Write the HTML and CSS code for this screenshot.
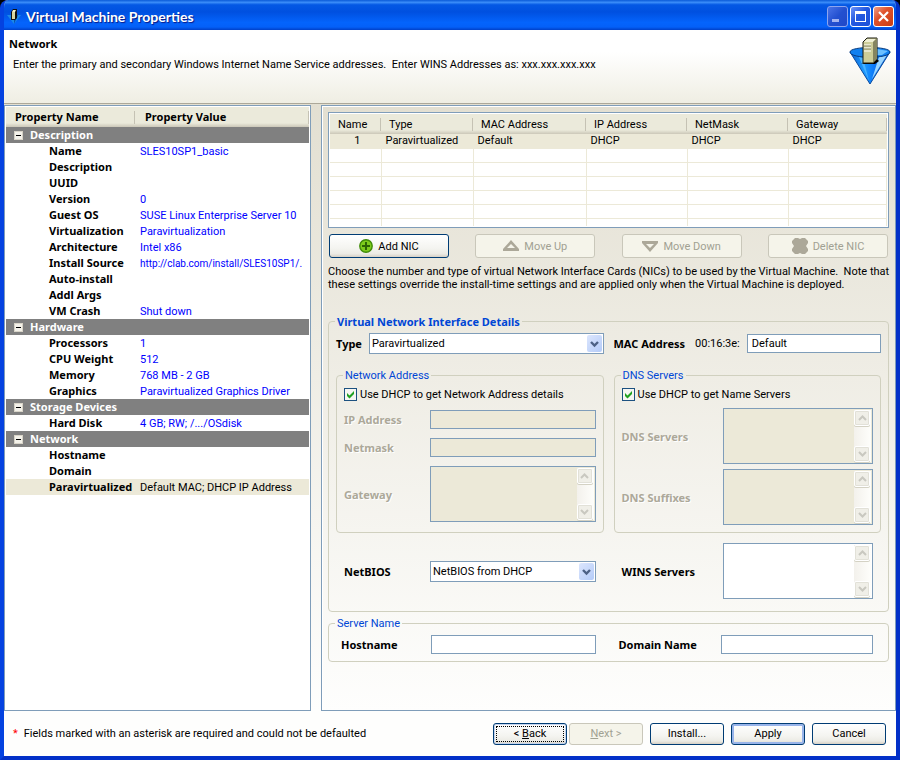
FILE: index.html
```html
<!DOCTYPE html>
<html lang="en">
<head>
    <meta charset="UTF-8">
    <meta name="viewport" content="width=device-width, initial-scale=1.0">
    <title>Virtual Machine Properties</title>
    <link rel="stylesheet" href="styles.css">
</head>
<body>
    <div class="window">
        <div class="titlebar">
            <svg class="app-icon" width="16" height="16" viewBox="0 0 16 16">
                <path d="M1 6 L15 6 L8 15 Z" fill="#1b8ae8"/>
                <path d="M8 6 L12 6 L8 15 Z" fill="#0a4fb0"/>
                <path d="M5 3 L7 0 L11 0 L11 9 L9 11 L5 11 Z" fill="#111"/>
                <path d="M6 3 H9 V10 H6 Z" fill="#d8d6a4"/>
                <path d="M7 1 H10 L9 3 H6 Z" fill="#f4f2d0"/>
            </svg>
            <h1>Virtual Machine Properties</h1>
            <div class="window-buttons">
                <button class="win-btn inactive" aria-label="Minimize">
                    <svg width="19" height="19" viewBox="0 0 19 19"><path d="M4 12 H11 V15 H4 Z" fill="#a3b4f0"/></svg>
                </button>
                <button class="win-btn" aria-label="Maximize">
                    <svg width="19" height="19" viewBox="0 0 19 19"><path d="M4 4 H15 V15 H4 Z M5 7 V14 H14 V7 Z" fill="#fff" fill-rule="evenodd"/></svg>
                </button>
                <button class="win-btn close" aria-label="Close">
                    <svg width="19" height="19" viewBox="0 0 19 19"><path d="M5 5 L14 14 M14 5 L5 14" stroke="#fff" stroke-width="2.2"/></svg>
                </button>
            </div>
        </div>

        <div class="banner">
            <div>
                <h2>Network</h2>
                <p>Enter the primary and secondary Windows Internet Name Service addresses.&nbsp; Enter WINS Addresses as: xxx.xxx.xxx.xxx</p>
            </div>
            <svg class="logo" width="42" height="48" viewBox="0 0 42 48">
                <defs>
                    <linearGradient id="cone" x1="0" x2="1" y1="0" y2="0">
                        <stop offset="0" stop-color="#0a5fd0"/>
                        <stop offset=".35" stop-color="#1e9bff"/>
                        <stop offset=".6" stop-color="#0a78f8"/>
                        <stop offset="1" stop-color="#0a58c8"/>
                    </linearGradient>
                </defs>
                <path d="M1 15 L21 47 L41 15 Z" fill="url(#cone)" stroke="#0b4a9c"/>
                <path d="M38 18 L30 20 L23 42 Z" fill="#9ad6ff"/>
                <path d="M10 20 L20 44 L14 21 Z" fill="#4ab4ff"/>
                <path d="M1 15 C1 9 41 9 41 15 C41 22 1 22 1 15 Z" fill="#1080f0" stroke="#083c80"/>
                <path d="M28 12 L39 14 L33 18 L28 18 Z" fill="#6cc0ff"/>
                <path d="M12 27 H26 L30 24 L28 22 Z" fill="#000"/>
                <path d="M14 5 L18 1 H28 V22 L24 26 H14 Z" fill="#cdcd98" stroke="#1a1a10"/>
                <path d="M15 5 L18 2 H27 L24 5 Z" fill="#f0f0d4"/>
                <path d="M24 5 L28 1 V22 L24 26 Z" fill="#858560"/>
                <path d="M15 8 H22 M15 11 H22 M15 14 H22" stroke="#fff"/>
                <path d="M15 9 H22 M15 12 H22" stroke="#8c8c6a"/>
            </svg>
        </div>

        <div class="content">
            <div class="property-pane">
                <table class="properties">
                    <thead>
                        <tr><th>Property Name</th><th>Property Value</th></tr>
                    </thead>
                    <tbody>
                        <tr class="group"><td colspan="2"><button class="toggle" aria-label="Collapse"></button>Description</td></tr>
                        <tr><th>Name</th><td>SLES10SP1_basic</td></tr>
                        <tr><th>Description</th><td></td></tr>
                        <tr><th>UUID</th><td></td></tr>
                        <tr><th>Version</th><td>0</td></tr>
                        <tr><th>Guest OS</th><td>SUSE Linux Enterprise Server 10</td></tr>
                        <tr><th>Virtualization</th><td>Paravirtualization</td></tr>
                        <tr><th>Architecture</th><td>Intel x86</td></tr>
                        <tr><th>Install Source</th><td class="url">http://clab.com/install/SLES10SP1/.</td></tr>
                        <tr><th>Auto-install</th><td></td></tr>
                        <tr><th>Addl Args</th><td></td></tr>
                        <tr><th>VM Crash</th><td>Shut down</td></tr>
                        <tr class="group"><td colspan="2"><button class="toggle" aria-label="Collapse"></button>Hardware</td></tr>
                        <tr><th>Processors</th><td>1</td></tr>
                        <tr><th>CPU Weight</th><td>512</td></tr>
                        <tr><th>Memory</th><td>768 MB - 2 GB</td></tr>
                        <tr><th>Graphics</th><td>Paravirtualized Graphics Driver</td></tr>
                        <tr class="group"><td colspan="2"><button class="toggle" aria-label="Collapse"></button>Storage Devices</td></tr>
                        <tr><th>Hard Disk</th><td>4 GB; RW; /.../OSdisk</td></tr>
                        <tr class="group"><td colspan="2"><button class="toggle" aria-label="Collapse"></button>Network</td></tr>
                        <tr><th>Hostname</th><td></td></tr>
                        <tr><th>Domain</th><td></td></tr>
                        <tr class="selected"><th>Paravirtualized</th><td>Default MAC; DHCP IP Address</td></tr>
                    </tbody>
                </table>
            </div>

            <div class="detail-pane">
                <div class="nic-box">
                    <table class="nics">
                        <thead>
                            <tr><th class="col-name">Name</th><th class="col-type">Type</th><th class="col-mac">MAC Address</th><th class="col-ip">IP Address</th><th class="col-mask">NetMask</th><th class="col-gw">Gateway</th></tr>
                        </thead>
                        <tbody>
                            <tr class="selected"><td>1</td><td>Paravirtualized</td><td>Default</td><td>DHCP</td><td>DHCP</td><td>DHCP</td></tr>
                            <tr><td></td><td></td><td></td><td></td><td></td><td></td></tr>
                            <tr><td></td><td></td><td></td><td></td><td></td><td></td></tr>
                            <tr><td></td><td></td><td></td><td></td><td></td><td></td></tr>
                            <tr><td></td><td></td><td></td><td></td><td></td><td></td></tr>
                            <tr><td></td><td></td><td></td><td></td><td></td><td></td></tr>
                            <tr><td></td><td></td><td></td><td></td><td></td><td></td></tr>
                        </tbody>
                    </table>
                </div>

                <div class="nic-actions">
                    <button class="btn">
                        <svg width="14" height="14" viewBox="0 0 14 14"><circle cx="7" cy="7" r="6.2" fill="#7ccb1c" stroke="#3f8a08" stroke-width="1.4"/><path d="M7 3 V11 M3 7 H11" stroke="#2c6404" stroke-width="2"/></svg>
                        Add NIC
                    </button>
                    <button class="btn" disabled>
                        <svg width="16" height="12" viewBox="0 0 16 12"><path d="M8 0 L16 9 V11 H0 V9 Z M8 4 L4 8 H12 Z" fill="#aca899" fill-rule="evenodd"/></svg>
                        Move Up
                    </button>
                    <button class="btn" disabled>
                        <svg width="16" height="12" viewBox="0 0 16 12"><path d="M8 12 L16 3 V1 H0 V3 Z M8 8 L4 4 H12 Z" fill="#aca899" fill-rule="evenodd"/></svg>
                        Move Down
                    </button>
                    <button class="btn" disabled>
                        <svg width="16" height="16" viewBox="0 0 16 16"><path d="M3 0 H6 L8 1 L10 0 H13 L16 3 V5 L14 8 L16 11 V13 L13 16 H10 L8 15 L6 16 H3 L0 13 V11 L2 8 L0 5 V3 Z" fill="#aca899"/></svg>
                        Delete NIC
                    </button>
                </div>

                <p class="hint">Choose the number and type of virtual Network Interface Cards (NICs) to be used by the Virtual Machine.&nbsp; Note that these settings override the install-time settings and are applied only when the Virtual Machine is deployed.</p>

                <fieldset class="nic-details">
                    <legend>Virtual Network Interface Details</legend>
                    <div class="columns">
                        <div class="type-row">
                            <label for="nicType">Type</label>
                            <div class="select">
                                <select id="nicType"><option>Paravirtualized</option></select>
                                <svg width="15" height="17" viewBox="0 0 15 17"><path d="M4 7 L7.5 10.5 L11 7" fill="none" stroke="#4d6185" stroke-width="2.4"/></svg>
                            </div>
                        </div>
                        <div class="mac-row">
                            <label for="mac">MAC Address</label>
                            <span>00:16:3e:</span>
                            <input type="text" id="mac" value="Default">
                        </div>

                        <fieldset class="address">
                            <legend>Network Address</legend>
                            <label class="check"><input type="checkbox" checked> Use DHCP to get Network Address details</label>
                            <div class="field">
                                <label for="ip">IP Address</label>
                                <input type="text" id="ip" disabled>
                            </div>
                            <div class="field">
                                <label for="netmask">Netmask</label>
                                <input type="text" id="netmask" disabled>
                            </div>
                            <div class="field">
                                <label for="gateway">Gateway</label>
                                <div class="list disabled">
                                    <textarea id="gateway" disabled></textarea>
                                    <div class="scrollbar">
                                        <button aria-label="Up"><svg width="9" height="6" viewBox="0 0 9 6"><path d="M1 5 L4.5 1.5 L8 5"/></svg></button>
                                        <button aria-label="Down"><svg width="9" height="6" viewBox="0 0 9 6"><path d="M1 1 L4.5 4.5 L8 1"/></svg></button>
                                    </div>
                                </div>
                            </div>
                        </fieldset>

                        <fieldset class="dns">
                            <legend>DNS Servers</legend>
                            <label class="check"><input type="checkbox" checked> Use DHCP to get Name Servers</label>
                            <div class="field">
                                <label for="dnsServers">DNS Servers</label>
                                <div class="list disabled">
                                    <textarea id="dnsServers" disabled></textarea>
                                    <div class="scrollbar">
                                        <button aria-label="Up"><svg width="9" height="6" viewBox="0 0 9 6"><path d="M1 5 L4.5 1.5 L8 5"/></svg></button>
                                        <button aria-label="Down"><svg width="9" height="6" viewBox="0 0 9 6"><path d="M1 1 L4.5 4.5 L8 1"/></svg></button>
                                    </div>
                                </div>
                            </div>
                            <div class="field">
                                <label for="dnsSuffixes">DNS Suffixes</label>
                                <div class="list disabled">
                                    <textarea id="dnsSuffixes" disabled></textarea>
                                    <div class="scrollbar">
                                        <button aria-label="Up"><svg width="9" height="6" viewBox="0 0 9 6"><path d="M1 5 L4.5 1.5 L8 5"/></svg></button>
                                        <button aria-label="Down"><svg width="9" height="6" viewBox="0 0 9 6"><path d="M1 1 L4.5 4.5 L8 1"/></svg></button>
                                    </div>
                                </div>
                            </div>
                        </fieldset>

                        <div class="field netbios">
                            <label for="netbios">NetBIOS</label>
                            <div class="select">
                                <select id="netbios"><option>NetBIOS from DHCP</option></select>
                                <svg width="15" height="17" viewBox="0 0 15 17"><path d="M4 7 L7.5 10.5 L11 7" fill="none" stroke="#4d6185" stroke-width="2.4"/></svg>
                            </div>
                        </div>
                        <div class="field wins">
                            <label for="wins">WINS Servers</label>
                            <div class="list">
                                <textarea id="wins"></textarea>
                                <div class="scrollbar">
                                    <button aria-label="Up"><svg width="9" height="6" viewBox="0 0 9 6"><path d="M1 5 L4.5 1.5 L8 5"/></svg></button>
                                    <button aria-label="Down"><svg width="9" height="6" viewBox="0 0 9 6"><path d="M1 1 L4.5 4.5 L8 1"/></svg></button>
                                </div>
                            </div>
                        </div>
                    </div>
                </fieldset>

                <fieldset class="server-name">
                    <legend>Server Name</legend>
                    <div class="columns">
                        <div class="field">
                            <label for="hostname">Hostname</label>
                            <input type="text" id="hostname">
                        </div>
                        <div class="field wins">
                            <label for="domain">Domain Name</label>
                            <input type="text" id="domain">
                        </div>
                    </div>
                </fieldset>
            </div>
        </div>

        <div class="footer">
            <p><span class="required">*</span>Fields marked with an asterisk are required and could not be defaulted</p>
            <div class="nav-buttons">
                <button class="btn focused">&lt; <u>B</u>ack</button>
                <button class="btn" disabled><u>N</u>ext &gt;</button>
            </div>
            <button class="btn">Install...</button>
            <button class="btn default">Apply</button>
            <button class="btn">Cancel</button>
        </div>
    </div>
</body>
</html>
```

FILE: styles.css
```css
* { box-sizing: border-box; }
body { margin: 0; background: #000; color: #000; font: 11px/13px Roboto, Tahoma, sans-serif; }
h1, h2, p { margin: 0; }
button, input, select, textarea { font: inherit; color: inherit; margin: 0; padding: 0; }

.window { display: flex; flex-direction: column; min-height: 100vh; background: linear-gradient(#dedaca, #fefefd 94%); border: 4px solid #0442e0; border-top: 0; border-right-color: #0230c8; border-bottom-color: #0230c8; border-radius: 8px 8px 0 0; overflow: hidden; }

/* title bar */
.titlebar { display: flex; align-items: center; gap: 4px; height: 30px; margin: 0 -4px; padding: 3px 6px 0 6px; background: linear-gradient(#0a5ad8, #3a8cf8 8%, #0458e4 16%, #0050e0 40%, #0464fc 75%, #0460f8 90%, #0040c8); }
.titlebar h1 { flex: 1; color: #fff; font: bold 14px/16px Lato, "Trebuchet MS", sans-serif; text-shadow: 1px 1px 1px #0a1883; }
.window-buttons { display: flex; gap: 2px; }
.win-btn { width: 21px; height: 21px; border: 1px solid #fff; border-radius: 3px; background: linear-gradient(135deg, #6d93f8, #2358e0 45%, #1d50d8); }
.win-btn svg { display: block; }
.win-btn.inactive { border-color: #8ea5ee; background: linear-gradient(135deg, #4a74e8, #2350d0 50%, #2048c8); }
.win-btn.close { background: linear-gradient(135deg, #f0a088, #e0522c 40%, #c83c14); }

/* banner */
.banner { display: flex; justify-content: space-between; height: 74px; padding: 7px 5px 0; background: linear-gradient(#fff 30%, #efeee3); border-bottom: 1px solid #aca899; }
.banner h2 { font: bold 11px/14px "Noto Sans", sans-serif; }
.banner p { padding: 7px 4px; }

/* main area */
.content { display: flex; flex: 1; gap: 10px; padding-top: 1px; }
.property-pane { width: 307px; padding: 1px; background: #fff; border: 1px solid #7f9db9; }
.detail-pane { flex: 1; min-width: 0; padding: 6px; border: 1px solid #7f9db9; box-shadow: inset 1px 1px #fff; }

.properties { width: 100%; table-layout: fixed; border-collapse: collapse; }
.properties th, .properties td { height: 16px; padding: 0; text-align: left; white-space: nowrap; line-height: 14px; }
.properties th, .properties .group td { font-family: "Noto Sans", sans-serif; font-weight: bold; }
.properties thead th { height: 20px; padding-left: 10px; background: linear-gradient(#c5c2b4, #c5c2b4) no-repeat right center / 1px 13px, linear-gradient(#ebeadb 16px, #cbc7b8); }
.properties thead th:first-child { width: 129px; padding-left: 9px; }
.properties tbody th { padding-left: 43px; }
.properties tbody td { padding: 2px 0 0 5px; color: #00f; }
.properties .group td { padding: 0 0 0 8px; background: #808080; color: #fff; }
.properties .url { font-size: 10px; }
.properties .selected { background: #ece9d8; }
.properties .selected td { color: #000; }
.toggle { width: 9px; height: 9px; margin-right: 7px; border: 1px solid #d8d4c8; background: linear-gradient(#000, #000) no-repeat center / 5px 1px #f4f2ea; vertical-align: 0; }

.nic-box { padding: 1px; background: #fff; border: 1px solid #7f9db9; }
.nics { width: 100%; table-layout: fixed; border-collapse: collapse; }
.nics th { height: 20px; padding: 0 0 0 8px; text-align: left; font-weight: normal; background: linear-gradient(#c5c2b4, #c5c2b4) no-repeat right center / 1px 13px, linear-gradient(#ebeadb 16px, #cbc7b8); }
.nics td { height: 14px; padding: 0 0 0 4px; line-height: 13px; border-right: 1px solid #ece9d8; border-bottom: 1px solid #ece9d8; }
.nics td:first-child { text-align: center; }
.nics .selected { background: #ece9d8; }
.nics tr:last-child td { height: 8px; border-bottom: 0; }
.col-name { width: 51px; }
.col-type { width: 92px; }
.col-mac { width: 113px; }
.col-ip, .col-mask { width: 101px; }

/* buttons */
.btn { display: flex; align-items: center; justify-content: center; gap: 5px; height: 22px; border: 1px solid #003c74; border-radius: 3px; background: linear-gradient(#fff, #f4f4f0 60%, #ecebe5 85%, #d6d0c5); }
.btn:disabled { border-color: #c9c7ba; background: #f5f4ea; color: #a1a192; }
.btn.default { box-shadow: inset 0 0 0 2px #98b4ea; }
.btn.focused { outline: 1px dotted #000; outline-offset: -4px; box-shadow: inset 0 0 0 1px #c5d4ee; }
.nic-actions { display: flex; justify-content: space-between; margin-top: 6px; padding: 0 1px; }
.nic-actions .btn { width: 120px; height: 24px; }
.hint { margin: 7px -5px 0 0; }

/* form */
fieldset { min-width: 0; margin: 0; padding: 0; border: 1px solid #d0d0bf; border-radius: 4px; }
legend { padding: 0 2px; color: #0046d5; }
label { font-family: "Noto Sans", sans-serif; font-weight: bold; }
input[type=text], select { height: 19px; border: 1px solid #7f9db9; background: #fff; }
input[type=text] { width: 100%; min-width: 0; padding-left: 4px; border-radius: 0; }
input[type=text]:disabled { background: #ece9d8; }
.nic-details { margin-top: 24px; padding: 5px 7px 12px; }
.nic-details legend, .server-name legend { margin-left: -1px; }
.nic-details > legend { font-family: "Noto Sans", sans-serif; font-weight: bold; }
.columns { display: grid; grid-template-columns: minmax(0, 1fr) minmax(0, 1fr); column-gap: 10px; }
.type-row, .mac-row { display: flex; align-items: center; gap: 7px; }
.mac-row span { padding-left: 3px; }
.mac-row input { flex: 1; }
.select { position: relative; flex: 1; }
select { display: block; width: 100%; height: 21px; padding-left: 2px; appearance: none; border-radius: 0; }
.select svg { position: absolute; right: 2px; top: 2px; border-radius: 2px; background: linear-gradient(135deg, #dce6fd, #b4cbf8); pointer-events: none; }
.address, .dns { margin-top: 15px; padding: 6px 7px 10px; }
.check { display: flex; align-items: center; gap: 3px; height: 13px; font-family: inherit; font-weight: normal; }
.check input { appearance: none; width: 13px; height: 13px; border: 1px solid #1c5180; background: url("data:image/svg+xml,%3Csvg xmlns='http://www.w3.org/2000/svg' viewBox='0 0 11 11'%3E%3Cpath d='M2 4 L4.500 6.500 L9 2 V5 L4.500 9.500 L2 7 Z' fill='%2321a121'/%3E%3C/svg%3E") #f6f6f2; }
.field { display: grid; grid-template-columns: 86px minmax(0, 1fr); align-items: center; margin-top: 9px; }
.address .field label, .dns .field label { color: #aca899; text-shadow: 1px 1px #fff; }
.dns { padding-bottom: 7px; }
.dns .field { grid-template-columns: 101px minmax(0, 1fr); margin-top: 5px; }
.dns .check + .field { margin-top: 7px; }
.list { display: flex; height: 56px; padding: 1px; border: 1px solid #7f9db9; background: #fff; }
.list.disabled { background: #ece9d8; }
.list textarea { flex: 1; min-width: 0; border: 0; background: none; resize: none; }
.scrollbar { display: flex; flex-direction: column; justify-content: space-between; width: 17px; padding-right: 1px; background: linear-gradient(90deg, #f3f1ec, #fefefb); }
.scrollbar button { display: flex; align-items: center; justify-content: center; width: 16px; height: 16px; border: 1px solid #fff; border-radius: 2px; background: #f0efe8; box-shadow: inset 0 0 0 1px #e2e1d8, 0 1px #d4d2c4; }
.scrollbar path { fill: none; stroke: #c9c8c0; stroke-width: 2; }
.netbios, .wins { margin-top: 10px; padding: 0 8px; }
.wins { grid-template-columns: 101px minmax(0, 1fr); }
.server-name { margin-top: 5px; padding: 5px 7px 7px; }
.server-name .field { grid-template-columns: 90px minmax(0, 1fr); margin-top: 0; padding: 0 8px 0 5px; }
.server-name .wins { grid-template-columns: 102px minmax(0, 1fr); }

/* footer */
.footer { display: flex; align-items: center; gap: 7px; height: 45px; padding: 0 10px 0 9px; }
.footer p { flex: 1; }
.footer .btn { display: block; width: 74px; }
.required { margin-right: 6px; color: #f00; }
.nav-buttons { display: flex; gap: 2px; }
```
